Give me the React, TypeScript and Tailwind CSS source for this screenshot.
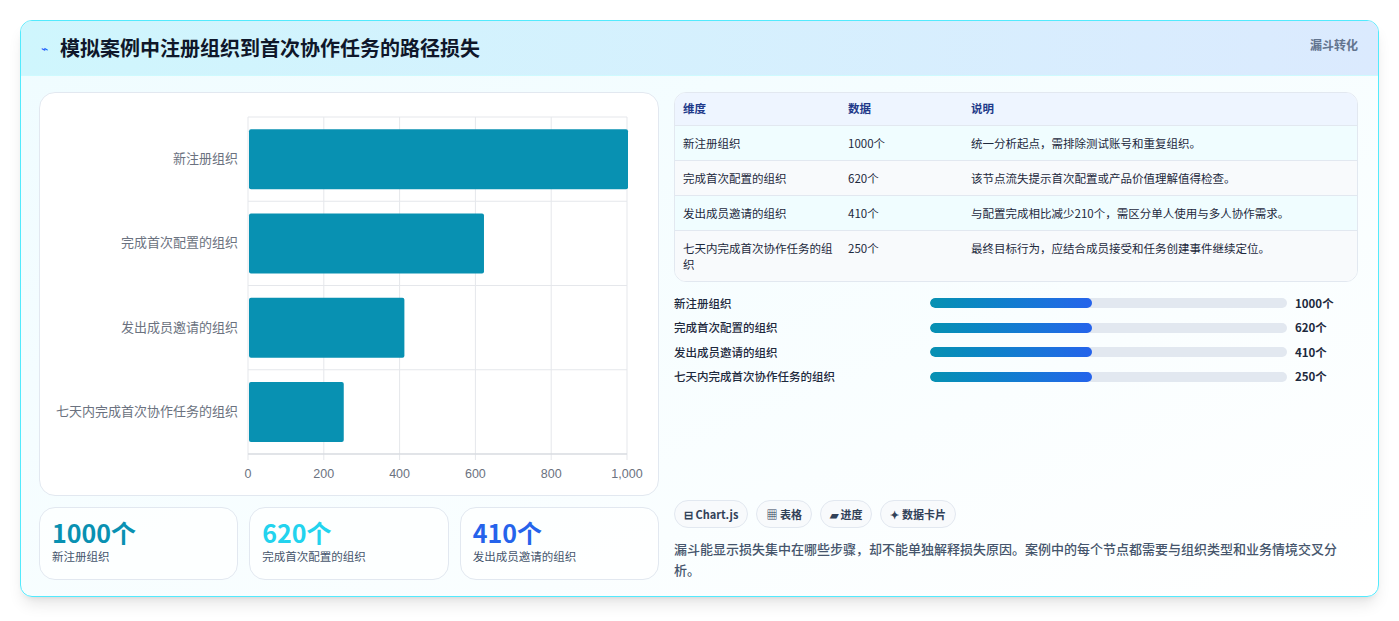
import React from "react";

const rows = [
  { name: "新注册组织", v: 1000, note: "统一分析起点，需排除测试账号和重复组织。" },
  { name: "完成首次配置的组织", v: 620, note: "该节点流失提示首次配置或产品价值理解值得检查。" },
  { name: "发出成员邀请的组织", v: 410, note: "与配置完成相比减少210个，需区分单人使用与多人协作需求。" },
  { name: "七天内完成首次协作任务的组织", v: 250, note: "最终目标行为，应结合成员接受和任务创建事件继续定位。" },
];

function Chart() {
  const x0 = 208, x1 = 587, y0 = 24, y1 = 361;
  const w = x1 - x0;
  const rh = (y1 - y0) / 4;
  return (
    <svg width="620" height="404" className="block">
      {[0, 200, 400, 600, 800, 1000].map((t) => {
        const x = x0 + (w * t) / 1000;
        return (
          <g key={t}>
            <line x1={x} x2={x} y1={y0} y2={y1 + 6} stroke="#e5e7eb" />
            <text x={x} y={385} textAnchor="middle" fontSize="12.5" fill="#6b7280" fontFamily="Liberation Sans, sans-serif">{t === 1000 ? "1,000" : t}</text>
          </g>
        );
      })}
      {[0, 1, 2, 3, 4].map((i) => (
        <line key={i} x1={x0} x2={x1} y1={y0 + rh * i} y2={y0 + rh * i} stroke="#e5e7eb" />
      ))}
      <line x1={x0} x2={x1} y1={y1} y2={y1} stroke="#d1d5db" />
      {rows.map((r, i) => {
        const cy = y0 + rh * i + rh / 2;
        return (
          <g key={r.name}>
            <rect x={x0 + 1} y={cy - 30} width={(w * r.v) / 1000} height={60} rx={2} fill="#0891b2" />
            <text x={x0 - 10} y={cy + 4} textAnchor="end" fontSize="13" fill="#6b7280" fontFamily="Noto Sans CJK SC, sans-serif">{r.name}</text>
          </g>
        );
      })}
    </svg>
  );
}

export default function App() {
  return (
    <div className="min-h-[621px] bg-white p-5" style={{ fontFamily: "'Noto Sans CJK SC', sans-serif" }}>
      <div className="rounded-xl border border-cyan-300 bg-gradient-to-br from-[#effcff] to-white shadow-lg overflow-hidden">
        <div className="h-[55px] flex items-center justify-between pl-5 pr-5 bg-gradient-to-r from-[#cff6fd] to-[#dbeafe] border-b border-cyan-100">
          <div className="flex items-center gap-3">
            <span className="text-blue-600 text-xs">⌁</span>
            <span className="text-[20px] font-bold text-[#0f172a]">模拟案例中注册组织到首次协作任务的路径损失</span>
          </div>
          <span className="self-start mt-4 text-xs font-bold text-slate-500">漏斗转化</span>
        </div>
        <div className="flex gap-[15px] pl-[18px] pr-5 pt-4 pb-4">
          <div className="w-[620px] flex flex-col gap-[11px]">
            <div className="h-[404px] rounded-2xl border border-slate-200 bg-white overflow-hidden"><Chart /></div>
            <div className="grid grid-cols-3 gap-[11px]">
              {[
                ["1000个", "text-[#0891b2]", "新注册组织"],
                ["620个", "text-[#22d3ee]", "完成首次配置的组织"],
                ["410个", "text-[#2563eb]", "发出成员邀请的组织"],
              ].map(([v, c, l]) => (
                <div key={l} className="h-[73px] rounded-2xl border border-slate-200 bg-white/70 px-3 pt-2">
                  <div className={`text-[25px] font-bold leading-8 ${c}`}>{v}</div>
                  <div className="text-[11.5px] text-slate-600">{l}</div>
                </div>
              ))}
            </div>
          </div>
          <div className="flex-1 flex flex-col">
            <div className="rounded-xl border border-slate-200 overflow-hidden text-[11.5px] text-slate-800 bg-white">
              <div className="flex h-[33px] items-center bg-[#eef5ff] text-[#1e3a8a] font-bold border-b border-slate-200">
                <div className="w-[173px] pl-[8px]">维度</div><div className="w-[123px]">数据</div><div>说明</div>
              </div>
              {rows.map((r, i) => (
                <div key={r.name} className={`flex py-[9px] ${i % 2 ? "bg-slate-50" : "bg-[#f0fdff]"} ${i < 3 ? "border-b border-slate-200" : ""}`}>
                  <div className="w-[173px] pl-[8px] pr-3 leading-4">{r.name}</div>
                  <div className="w-[123px] leading-4">{r.v}个</div>
                  <div className="leading-4">{r.note}</div>
                </div>
              ))}
            </div>
            <div className="mt-[9px] flex flex-col">
              {rows.map((r) => (
                <div key={r.name} className="flex items-center h-[24.5px] text-[11.5px] text-slate-800 font-medium">
                  <div className="w-[256px]">{r.name}</div>
                  <div className="w-[357px] h-[10px] rounded-full bg-slate-200 overflow-hidden">
                    <div className="h-full w-[162px] rounded-full bg-gradient-to-r from-[#0891b2] to-[#2563eb]" />
                  </div>
                  <div className="ml-2 font-bold">{r.v}个</div>
                </div>
              ))}
            </div>
            <div className="mt-auto flex gap-2">
              {["⊟ Chart.js", "▦ 表格", "▰ 进度", "✦ 数据卡片"].map((t) => (
                <span key={t} className="h-[28px] px-[9px] flex items-center rounded-full border border-slate-200 bg-slate-50 text-[11px] font-bold text-slate-700">{t}</span>
              ))}
            </div>
            <p className="mt-[10px] text-[13px] leading-[21px] font-medium text-slate-600">漏斗能显示损失集中在哪些步骤，却不能单独解释损失原因。案例中的每个节点都需要与组织类型和业务情境交叉分析。</p>
          </div>
        </div>
      </div>
    </div>
  );
}
